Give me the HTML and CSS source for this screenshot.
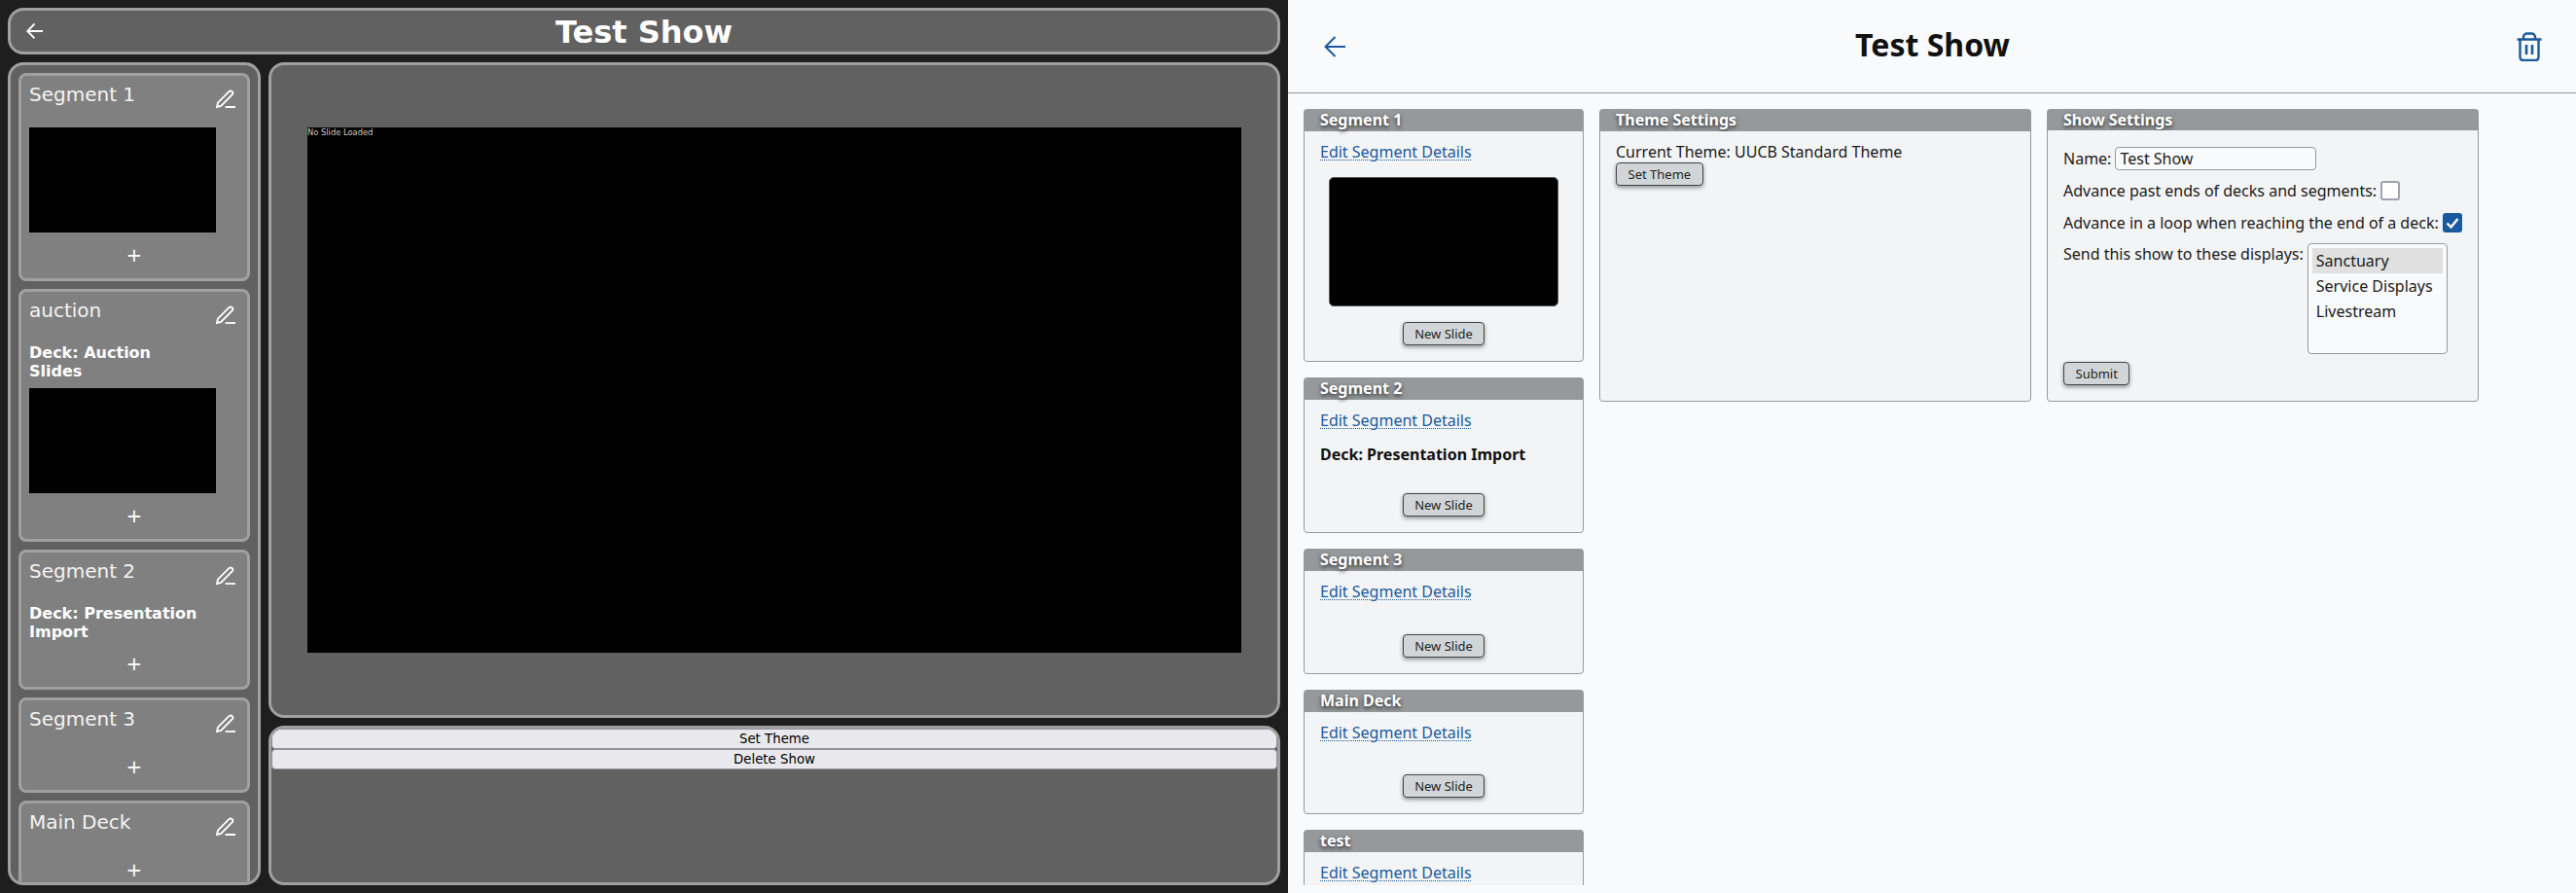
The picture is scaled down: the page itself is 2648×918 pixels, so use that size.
FILE: index.html
```html
<!DOCTYPE html>
<html lang="en">
<head>
<meta charset="utf-8">
<title>Test Show</title>
<link rel="stylesheet" href="styles.css">
</head>
<body>
<div class="left">
  <header class="box topbar">
    <svg class="back-icon" viewBox="0 0 18 18"><path d="M17 9H1.5M8.5 1.5 1.2 9l7.3 7.3"/></svg>
    <h1 class="topbar-title">Test Show</h1>
  </header>
  <aside class="box sidebar">
    <section class="card">
      <div class="card-head"><span class="card-title">Segment 1</span><svg class="pencil" viewBox="0 0 20 20"><path d="M1 18l.9-4.3L13.4 2.2a2.3 2.3 0 0 1 3.6 2.8L5.2 17z"/><path d="M9.6 18H20"/></svg></div>
      <div class="card-thumb"></div>
      <div class="plus">+</div>
    </section>
    <section class="card">
      <div class="card-head"><span class="card-title">auction</span><svg class="pencil" viewBox="0 0 20 20"><path d="M1 18l.9-4.3L13.4 2.2a2.3 2.3 0 0 1 3.6 2.8L5.2 17z"/><path d="M9.6 18H20"/></svg></div>
      <div class="card-deck">Deck: Auction Slides</div>
      <div class="card-thumb"></div>
      <div class="plus">+</div>
    </section>
    <section class="card">
      <div class="card-head"><span class="card-title">Segment 2</span><svg class="pencil" viewBox="0 0 20 20"><path d="M1 18l.9-4.3L13.4 2.2a2.3 2.3 0 0 1 3.6 2.8L5.2 17z"/><path d="M9.6 18H20"/></svg></div>
      <div class="card-deck">Deck: Presentation Import</div>
      <div class="plus">+</div>
    </section>
    <section class="card">
      <div class="card-head"><span class="card-title">Segment 3</span><svg class="pencil" viewBox="0 0 20 20"><path d="M1 18l.9-4.3L13.4 2.2a2.3 2.3 0 0 1 3.6 2.8L5.2 17z"/><path d="M9.6 18H20"/></svg></div>
      <div class="plus">+</div>
    </section>
    <section class="card">
      <div class="card-head"><span class="card-title">Main Deck</span><svg class="pencil" viewBox="0 0 20 20"><path d="M1 18l.9-4.3L13.4 2.2a2.3 2.3 0 0 1 3.6 2.8L5.2 17z"/><path d="M9.6 18H20"/></svg></div>
      <div class="plus">+</div>
    </section>
  </aside>
  <main class="box stage">
    <div class="slide">No Slide Loaded</div>
  </main>
  <section class="box actions">
    <button class="action-btn">Set Theme</button>
    <button class="action-btn">Delete Show</button>
  </section>
</div>
<div class="right">
  <header class="page-head">
    <svg class="page-back" viewBox="0 0 22 22"><path d="M22 11H1.5M11.5 1 1.5 11l10 10"/></svg>
    <h1 class="page-title">Test Show</h1>
    <svg class="page-trash" viewBox="0 0 26 30"><path d="M0.5 7.5h25M7 7V5a3.5 3.5 0 0 1 3.5-3.5h5A3.5 3.5 0 0 1 19 5v2M3.5 7.5V26a3 3 0 0 0 3 3h13a3 3 0 0 0 3-3V7.5"/><path class="trash-bars" d="M10 13v10M16 13v10"/></svg>
  </header>
  <div class="page-body">
    <div class="segments">
      <section class="panel">
        <h2 class="panel-head">Segment 1</h2>
        <div class="panel-body centered-foot">
          <a class="link" href="#">Edit Segment Details</a>
          <div class="thumb"></div>
          <button class="btn">New Slide</button>
        </div>
      </section>
      <section class="panel">
        <h2 class="panel-head">Segment 2</h2>
        <div class="panel-body centered-foot">
          <a class="link" href="#">Edit Segment Details</a>
          <div class="deck">Deck: Presentation Import</div>
          <button class="btn">New Slide</button>
        </div>
      </section>
      <section class="panel">
        <h2 class="panel-head">Segment 3</h2>
        <div class="panel-body centered-foot">
          <a class="link" href="#">Edit Segment Details</a>
          <div class="no-slides"></div>
          <button class="btn">New Slide</button>
        </div>
      </section>
      <section class="panel">
        <h2 class="panel-head">Main Deck</h2>
        <div class="panel-body centered-foot">
          <a class="link" href="#">Edit Segment Details</a>
          <div class="no-slides"></div>
          <button class="btn">New Slide</button>
        </div>
      </section>
      <section class="panel">
        <h2 class="panel-head">test</h2>
        <div class="panel-body centered-foot">
          <a class="link" href="#">Edit Segment Details</a>
        </div>
      </section>
    </div>
    <section class="panel settings">
      <h2 class="panel-head">Theme Settings</h2>
      <div class="panel-body">
        <div class="line">Current Theme: UUCB Standard Theme</div>
        <button class="btn theme-btn">Set Theme</button>
      </div>
    </section>
    <section class="panel settings">
      <h2 class="panel-head">Show Settings</h2>
      <form class="panel-body form">
        <label class="row"><span>Name:</span><input class="text-input" type="text" value="Test Show"></label>
        <div class="row"><span>Advance past ends of decks and segments:</span><span class="check"></span></div>
        <div class="row"><span>Advance in a loop when reaching the end of a deck:</span><span class="check checked"><svg class="tick" viewBox="0 0 20 20"><path d="M4.5 10.5 8.5 14.5 15.5 6"/></svg></span></div>
        <div class="row row-top"><span>Send this show to these displays:</span>
          <ul class="listbox">
            <li class="option selected">Sanctuary</li>
            <li class="option">Service Displays</li>
            <li class="option">Livestream</li>
          </ul>
        </div>
        <div><button class="btn" type="button">Submit</button></div>
      </form>
    </section>
  </div>
</div>
</body>
</html>
```
FILE: styles.css
```css
* { box-sizing: border-box; }
html, body { margin: 0; height: 918px; overflow: hidden; }
body { display: flex; width: 2648px; font-family: "Noto Sans", sans-serif; font-size: 16px; }

.left {
  width: 1324px;
  height: 918px;
  padding: 8px;
  background: #1e1e1e;
  display: grid;
  grid-template-columns: 260px 1040px;
  grid-template-rows: 48px 674px 164px;
  gap: 8px;
  font-family: "DejaVu Sans", sans-serif;
  color: #fff;
}
.box { border: 3px solid #a0a0a0; border-radius: 16px; background: #616161; overflow: hidden; }

.topbar { grid-column: 1 / 3; display: flex; align-items: center; padding: 0 16px; }
.back-icon { width: 18px; height: 18px; fill: none; stroke: #fff; stroke-width: 1.8; }
.topbar-title { flex: 1; margin: 2px 18px 0 0; text-align: center; font-size: 32px; line-height: 37px; font-weight: 700; }

.sidebar { grid-row: 2 / 4; padding: 8px; display: flex; flex-direction: column; gap: 8px; }
.card { flex: none; border: 3px solid #a0a0a0; border-radius: 8px; background: #808080; padding: 8px; }
.card-head { display: flex; justify-content: space-between; height: 45px; }
.card-title { font-size: 20px; line-height: 23px; color: #f4f4f4; }
.pencil { width: 20px; height: 20px; margin: 6px 4px 0 0; fill: none; stroke: #fff; stroke-width: 1.8; }
.card-deck { width: 180px; margin-bottom: 8px; font-size: 16px; line-height: 19px; font-weight: 700; }
.card-thumb { width: 192px; height: 108px; margin-bottom: 8px; background: #000; }
.plus { height: 31px; text-align: center; font-size: 20px; line-height: 30px; }

.stage { display: flex; align-items: center; justify-content: center; }
.slide { width: 960px; height: 540px; background: #000; color: #ccc; font-size: 8.33px; line-height: 10px; }

.actions { grid-column: 2; display: flex; flex-direction: column; }
.action-btn {
  flex: none;
  height: 21px;
  padding: 0;
  border: 1px solid #8f8f9d;
  border-radius: 4px;
  background: #e9e9ed;
  color: #000;
  font-family: "DejaVu Sans", sans-serif;
  font-size: 13.33px;
}

.right { flex: 1; height: 918px; display: flex; flex-direction: column; background: #f9fafc; padding-bottom: 8px; color: #1a1a1a; }
.page-head { flex: none; height: 96px; border-bottom: 1px solid #999; display: flex; align-items: center; padding: 0 35px 0 37px; }
.page-back { width: 22px; height: 22px; fill: none; stroke: #1a5a9c; stroke-width: 2; }
.page-title { flex: 1; margin: -3px 0 0 3px; text-align: center; font-size: 32px; line-height: 44px; font-weight: 700; color: #111; }
.page-trash { width: 26px; height: 30px; fill: none; stroke: #1a5a9c; stroke-width: 2.4; }
.trash-bars { stroke-width: 2.6; }

.page-body {
  flex: 1;
  min-height: 0;
  overflow: hidden;
  padding: 16px 16px 0;
  display: grid;
  grid-template-columns: 288px 444px 444px;
  column-gap: 16px;
  align-items: start;
}
.segments { display: flex; flex-direction: column; gap: 16px; }

.panel { border-radius: 4px; overflow: hidden; }
.settings { height: 301px; display: flex; flex-direction: column; }
.panel-head {
  margin: 0;
  height: 23px;
  padding-left: 17px;
  background: #96999b;
  color: #fff;
  font-size: 16px;
  line-height: 22px;
  font-weight: 700;
  text-shadow: 0 2px 4px rgba(0, 0, 0, 0.75);
}
.panel-body {
  flex: 1;
  background: #f3f4f6;
  border: 1px solid #999;
  border-top: 0;
  border-radius: 0 0 4px 4px;
  padding: 9px 16px 16px;
}
.centered-foot { display: flex; flex-direction: column; align-items: flex-start; }
.centered-foot .btn { align-self: center; }
.link { line-height: 24px; height: 24px; color: #1a5a9c; text-decoration: underline dotted 1px; text-underline-offset: 2px; }
.thumb { align-self: center; width: 236px; height: 133px; margin: 14px 0 16px; background: #000; border: 1px solid #555; border-radius: 5px; }
.deck { margin: 11px 0 28px; font-weight: 700; line-height: 24px; color: #111; }
.no-slides { height: 31.5px; }

.btn {
  height: 24px;
  padding: 0 11.5px;
  border: 1px solid #444;
  border-radius: 4px;
  background: #d1d5d8;
  color: #222;
  font-family: "Noto Sans", sans-serif;
  font-size: 13px;
  line-height: 20px;
  box-shadow: 0 2px 4px rgba(0, 0, 0, 0.4);
}
.line { line-height: 24px; }
.theme-btn { display: block; margin-top: -1px; }

.form { display: flex; flex-direction: column; gap: 8.67px; padding-top: 17px; }
.row { display: flex; align-items: center; gap: 4px; height: 24px; line-height: 24px; white-space: nowrap; }
.row-top { align-items: flex-start; height: 114px; }
.text-input {
  width: 207px;
  height: 24px;
  padding: 0 4px;
  border: 1px solid #999;
  border-radius: 4px;
  background: #f9fafc;
  color: #1a1a1a;
  font-family: "Noto Sans", sans-serif;
  font-size: 16px;
}
.check { flex: none; width: 20px; height: 20px; border: 2px solid #a0a0b0; border-radius: 3px; background: #fff; }
.checked { border: 0; background: #1a5a9c; }
.tick { display: block; width: 20px; height: 20px; fill: none; stroke: #fff; stroke-width: 2.4; }
.listbox {
  flex: none;
  width: 144px;
  height: 114px;
  margin: 1px 0 0;
  padding: 4px;
  list-style: none;
  border: 1px solid #999;
  border-radius: 4px;
  background: #f9fafc;
}
.option { height: 26px; line-height: 26px; padding-left: 4px; }
.selected { background: #e0e0e0; }
```
